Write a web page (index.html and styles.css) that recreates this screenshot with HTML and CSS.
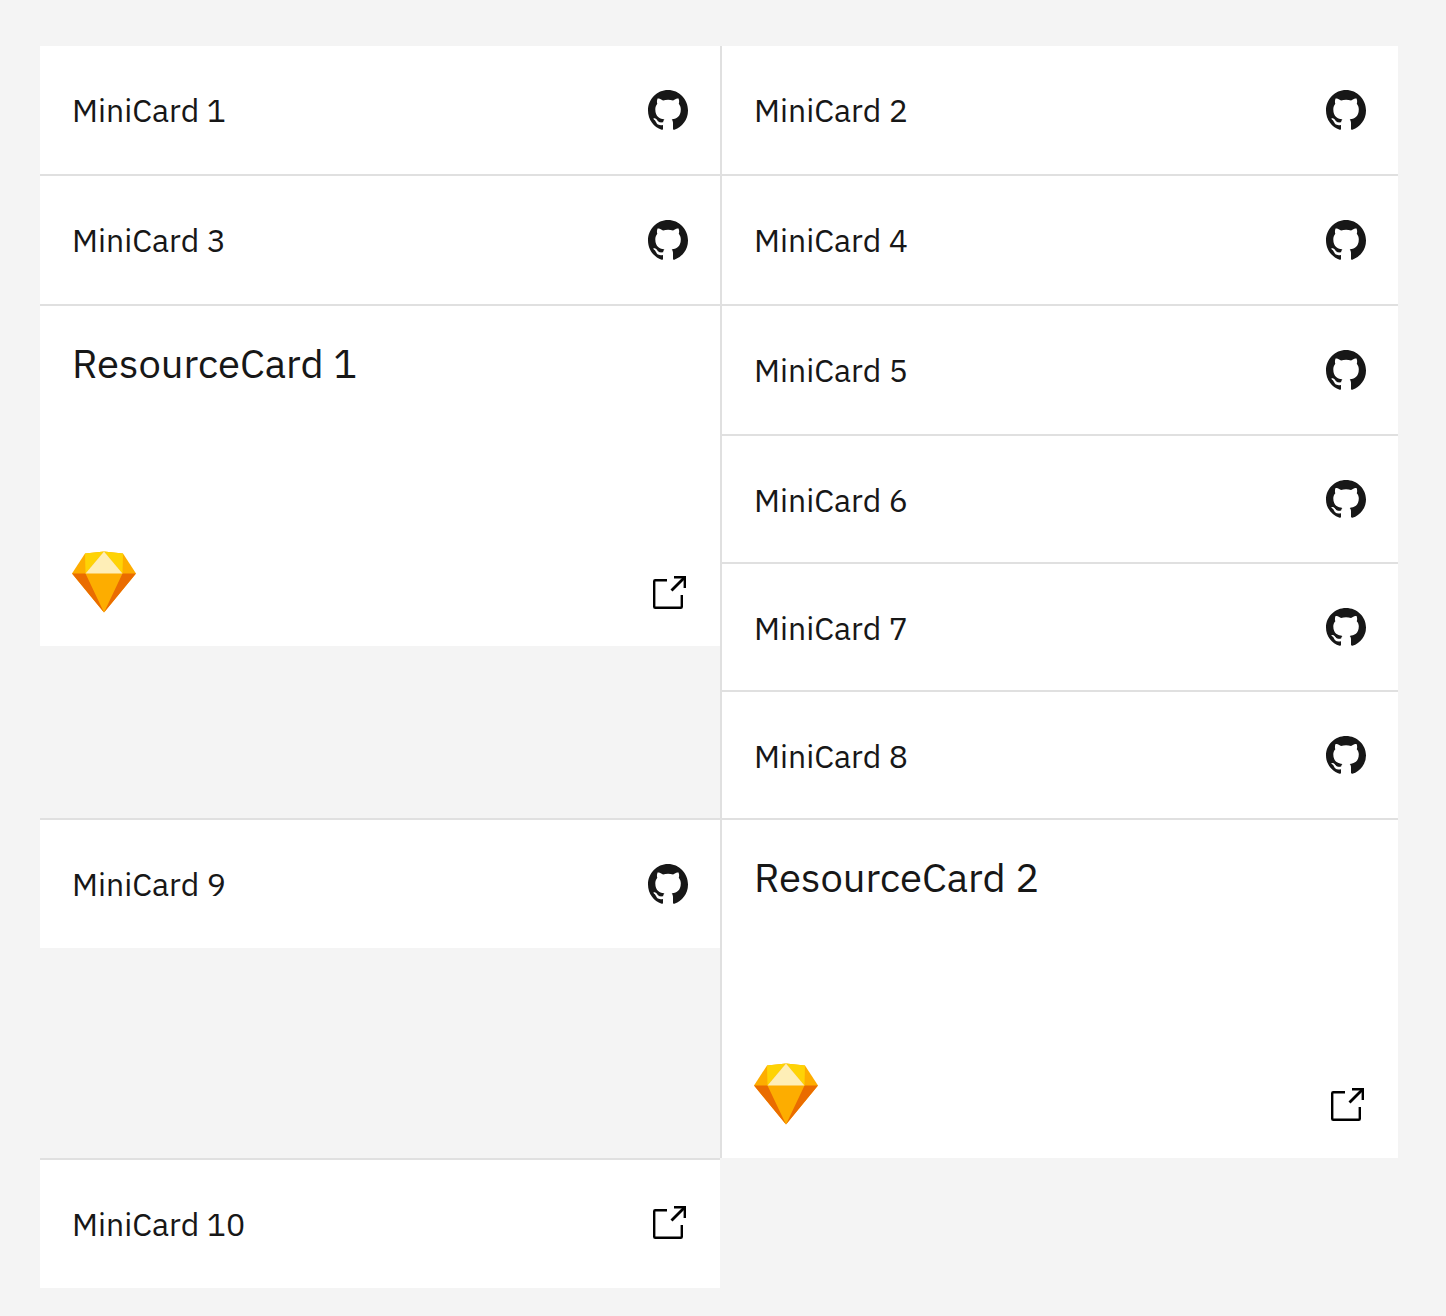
FILE: index.html
```html
<!DOCTYPE html>
<html lang="en">
<head>
<meta charset="utf-8">
<meta name="viewport" content="width=device-width, initial-scale=1">
<title>Cards</title>
<link rel="stylesheet" href="styles.css">
</head>
<body>
<svg class="sprite" aria-hidden="true">
  <symbol id="github" viewBox="0 0 16 16" preserveAspectRatio="none">
    <g transform="scale(1 1.02)">
    <path d="M8 0C3.58 0 0 3.58 0 8c0 3.54 2.29 6.53 5.47 7.59.4.07.55-.17.55-.38 0-.19-.01-.82-.01-1.49-2.01.37-2.53-.49-2.69-.94-.09-.23-.48-.94-.82-1.13-.28-.15-.68-.52-.01-.53.63-.01 1.08.58 1.23.82.72 1.21 1.87.87 2.33.66.07-.52.28-.87.51-1.07-1.78-.2-3.64-.89-3.64-3.95 0-.87.31-1.59.82-2.15-.08-.2-.36-1.02.08-2.12 0 0 .67-.21 2.2.82.64-.18 1.32-.27 2-.27s1.36.09 2 .27c1.53-1.04 2.2-.82 2.2-.82.44 1.1.16 1.92.08 2.12.51.56.82 1.27.82 2.15 0 3.07-1.87 3.75-3.65 3.95.29.25.54.73.54 1.48 0 1.07-.01 1.93-.01 2.2 0 .21.15.46.55.38A8.01 8.01 0 0 0 16 8c0-4.42-3.58-8-8-8z"/>
    <path d="M2.5 11.4c1.2.2 1.1 1.6 3.5 1.6" fill="none" stroke="#fff" stroke-width=".3"/>
    </g>
  </symbol>
  <symbol id="launch" viewBox="0 0 40 40">
    <path d="M19 6.2H7.2a1 1 0 0 0-1 1v25.6a1 1 0 0 0 1 1h25.6a1 1 0 0 0 1-1V21M26 3.2h10.8V14" fill="none" stroke="#000" stroke-width="2.4"/>
    <path d="M23.5 16.5 36.5 3.5" fill="none" stroke="#000" stroke-width="2.8"/>
  </symbol>
  <symbol id="sketch" viewBox="0 0 64 64">
    <path fill="#fdad00" d="M13 3.5 32 1.5 51 3.5 64 23.5 32 62.5 0 23.5z"/>
    <path fill="#ea6c00" d="M0 23.5h13.5L32 62.5zM64 23.5H50.5L32 62.5z"/>
    <path fill="#fed305" d="M13 3.5 32 1.5 13.5 23.5zM51 3.5 32 1.5 50.5 23.5z"/>
    <path fill="#feeeb7" d="M32 1.5 50.5 23.5h-37z"/>
  </symbol>
</svg>
<main class="card-grid">
  <div class="cell"><a class="mini-card" href="#"><span class="mini-title">MiniCard 1</span><svg class="icon"><use href="#github"/></svg></a></div>
  <div class="cell cell-right"><a class="mini-card" href="#"><span class="mini-title">MiniCard 2</span><svg class="icon"><use href="#github"/></svg></a></div>

  <div class="cell"><a class="mini-card" href="#"><span class="mini-title">MiniCard 3</span><svg class="icon"><use href="#github"/></svg></a></div>
  <div class="cell cell-right"><a class="mini-card" href="#"><span class="mini-title">MiniCard 4</span><svg class="icon"><use href="#github"/></svg></a></div>

  <div class="cell">
    <a class="resource-card resource-card-tall" href="#">
      <span class="resource-title">ResourceCard 1</span>
      <span class="resource-footer"><svg class="logo"><use href="#sketch"/></svg><svg class="icon"><use href="#launch"/></svg></span>
    </a>
  </div>
  <div class="cell cell-right stack">
    <a class="mini-card" href="#"><span class="mini-title">MiniCard 5</span><svg class="icon"><use href="#github"/></svg></a>
    <a class="mini-card compact" href="#"><span class="mini-title">MiniCard 6</span><svg class="icon"><use href="#github"/></svg></a>
    <a class="mini-card compact" href="#"><span class="mini-title">MiniCard 7</span><svg class="icon"><use href="#github"/></svg></a>
    <a class="mini-card compact" href="#"><span class="mini-title">MiniCard 8</span><svg class="icon"><use href="#github"/></svg></a>
  </div>

  <div class="cell"><a class="mini-card" href="#"><span class="mini-title">MiniCard 9</span><svg class="icon"><use href="#github"/></svg></a></div>
  <div class="cell cell-right cell-end">
    <a class="resource-card" href="#">
      <span class="resource-title">ResourceCard 2</span>
      <span class="resource-footer"><svg class="logo"><use href="#sketch"/></svg><svg class="icon"><use href="#launch"/></svg></span>
    </a>
  </div>

  <div class="cell cell-end"><a class="mini-card" href="#"><span class="mini-title">MiniCard 10</span><svg class="icon"><use href="#launch"/></svg></a></div>
</main>
</body>
</html>
```
FILE: styles.css
```css
* {
  box-sizing: border-box;
}

body {
  margin: 0;
  background: #f4f4f4;
  color: #171717;
  font-family: "IBM Plex Sans", Roboto, sans-serif;
}

.sprite {
  position: absolute;
  width: 0;
  height: 0;
}

.card-grid {
  display: grid;
  grid-template-columns: calc(50% + 1px) minmax(0, 1fr);
  grid-template-rows: auto auto auto minmax(340px, auto) auto;
  padding: 46px 48px 28px 40px;
}

.cell {
  border-bottom: 2px solid #e0e0e0;
}

.cell-right {
  border-left: 2px solid #e0e0e0;
}

.cell-end {
  align-self: start;
  border-bottom: 0;
}

.stack {
  display: flex;
  flex-direction: column;
  gap: 2px;
  background: #e0e0e0;
}

.mini-card,
.resource-card {
  display: flex;
  justify-content: space-between;
  background: #fff;
  color: inherit;
  text-decoration: none;
}

.mini-card {
  align-items: flex-start;
  min-height: 128px;
  padding: 44px 32px 40px;
}

.mini-title {
  font-size: 32px;
  line-height: 40px;
}

.icon {
  flex: none;
  width: 40px;
  height: 40px;
  fill: #171717;
}

.compact {
  min-height: 126px;
}

.compact .icon {
  height: 38px;
}

.resource-card {
  flex-direction: column;
  min-height: 338px;
  padding: 32px;
}

.resource-card-tall {
  min-height: 340px;
}

.resource-title {
  font-size: 40px;
  line-height: 50px;
}

.resource-footer {
  display: flex;
  align-items: flex-end;
  justify-content: space-between;
}

.logo {
  width: 64px;
  height: 64px;
}
```
